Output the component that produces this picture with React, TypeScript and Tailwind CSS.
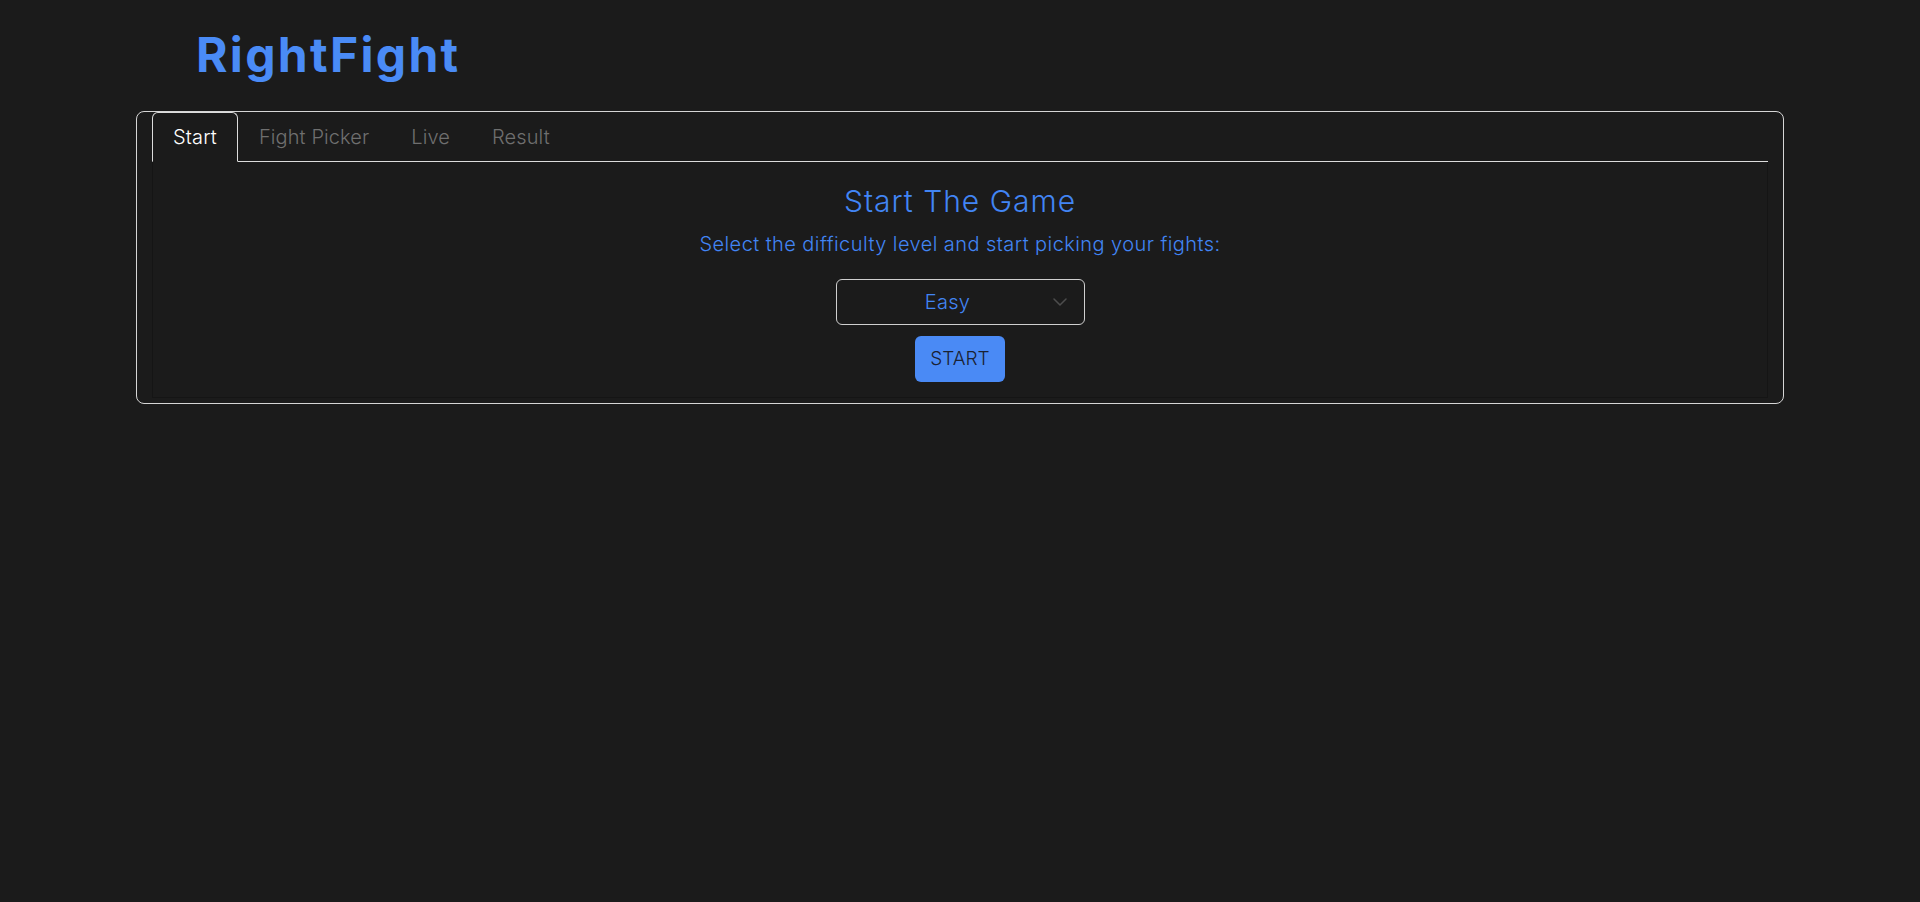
const tabs = ["Start", "Fight Picker", "Live", "Result"];

export default function App() {
  const active = "Start";

  return (
    <div className="min-h-screen bg-[#1b1b1b] font-['Inter',sans-serif]">
      <div className="px-[136px]">
        <h1 className="pl-[60px] pt-[26px] text-[48px] font-bold leading-[58px] tracking-[0.048em] text-[#4a8bf6]">
          RightFight
        </h1>

        <div className="mt-[27px] rounded-lg border border-[#d6d6d6] px-[15px] pb-[5px]">
          <div className="flex border-b border-[#dcdcdc]">
            {tabs.map((tab) => (
              <div
                key={tab}
                className={
                  tab === active
                    ? "-mb-px rounded-t-md border border-[#dcdcdc] border-b-[#1b1b1b] bg-[#1b1b1b] px-5 py-[9px] text-[20px] font-light leading-[30px] tracking-[0.15px] text-white"
                    : "-mb-px border border-transparent px-5 py-[9px] text-[20px] font-light leading-[30px] tracking-[0.1px] text-[#6f6f6f]"
                }
              >
                {tab}
              </div>
            ))}
          </div>

          <div className="flex flex-col items-center border-x border-b border-[#151515] pb-[15px]">
            <h2 className="mt-[21px] text-[30px] font-light leading-[36px] tracking-[1px] text-[#4285f4]">
              Start The Game
            </h2>
            <p className="mt-[11px] text-[20px] font-light leading-[28px] tracking-[0.43px] text-[#4285f4]">
              Select the difficulty level and start picking your fights:
            </p>

            <div className="mt-[21px] flex h-[46px] w-[249px] items-center rounded-md border border-[#cfcfcf] pl-[20px] pr-[17px]">
              <span className="flex-1 text-center text-[20px] font-light tracking-[0.3px] text-[#4285f4]">Easy</span>
              <svg width="14" height="8" viewBox="0 0 14 8" fill="none" className="ml-[14px]">
                <path d="M1 1l6 6 6-6" stroke="#4d4d4d" strokeWidth="1.5" strokeLinecap="round" strokeLinejoin="round" />
              </svg>
            </div>

            <button className="mt-[11px] flex h-[46px] w-[90px] items-center justify-center rounded-md bg-[#4a8af5] text-[19px] font-light text-[#1a2233]">
              START
            </button>
          </div>
        </div>
      </div>
    </div>
  );
}
